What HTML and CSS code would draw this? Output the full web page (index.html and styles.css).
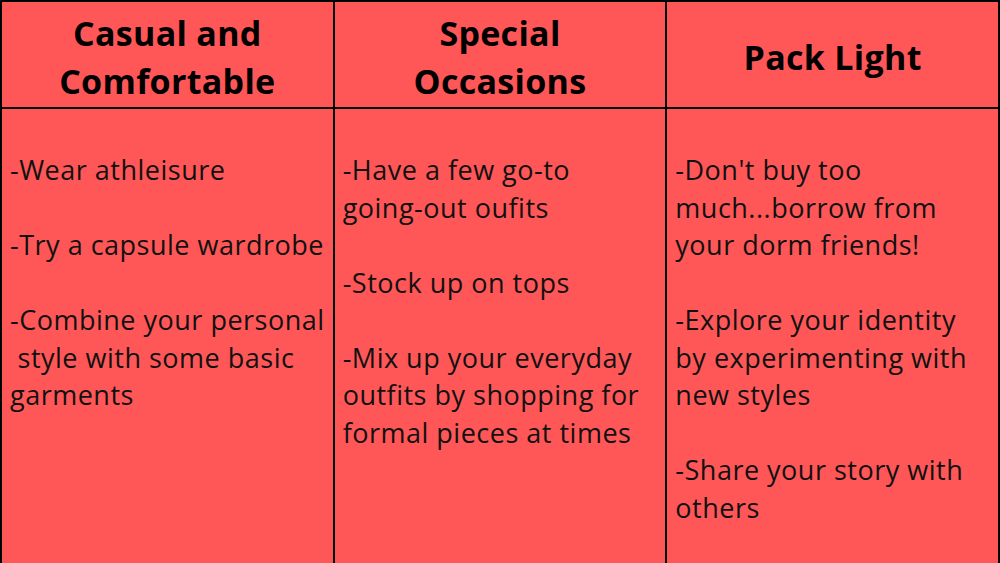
FILE: index.html
```html
<!DOCTYPE html>
<html>
<head>
<meta charset="utf-8">
<link rel="stylesheet" href="styles.css">
</head>
<body>
<div class="table">
  <div class="cell head"><h2>Casual and<br>Comfortable</h2></div>
  <div class="cell head"><h2>Special<br>Occasions</h2></div>
  <div class="cell head"><h2>Pack Light</h2></div>
  <div class="cell body">
    <p>-Wear athleisure</p>
    <p>-Try a capsule wardrobe</p>
    <p>-Combine your personal<br>&nbsp;style with some basic<br>garments</p>
  </div>
  <div class="cell body">
    <p>-Have a few go-to<br>going-out oufits</p>
    <p>-Stock up on tops</p>
    <p>-Mix up your everyday<br>outfits by shopping for<br>formal pieces at times</p>
  </div>
  <div class="cell body">
    <p>-Don't buy too<br>much...borrow from<br>your dorm friends!</p>
    <p>-Explore your identity<br>by experimenting with<br>new styles</p>
    <p>-Share your story with<br>others</p>
  </div>
</div>
</body>
</html>
```

FILE: styles.css
```css
html, body {
  margin: 0;
  padding: 0;
  background: #000;
}
.table {
  width: 1000px;
  height: 563px;
  box-sizing: border-box;
  border: 2px solid #000;
  background: #000;
  display: grid;
  grid-template-columns: 1fr 1fr 1fr;
  grid-template-rows: 105px 1fr;
  gap: 2px;
}
.cell {
  background: #ff5757;
  color: #111;
}
.head {
  display: flex;
  align-items: center;
  justify-content: center;
  text-align: center;
  padding-top: 4px;
  box-sizing: border-box;
}
.head h2 {
  margin: 0;
  font-family: "Open Sans", "DejaVu Sans", sans-serif;
  font-weight: 700;
  font-size: 34px;
  letter-spacing: 0.3px;
  line-height: 48px;
  color: #000;
}
.body {
  padding: 42px 0 0 8px;
  font-family: "Open Sans", "DejaVu Sans", sans-serif;
  font-size: 27px;
  letter-spacing: 0.5px;
  line-height: 37.5px;
}
.body p {
  margin: 0 0 37.5px 0;
  white-space: nowrap;
}
```
